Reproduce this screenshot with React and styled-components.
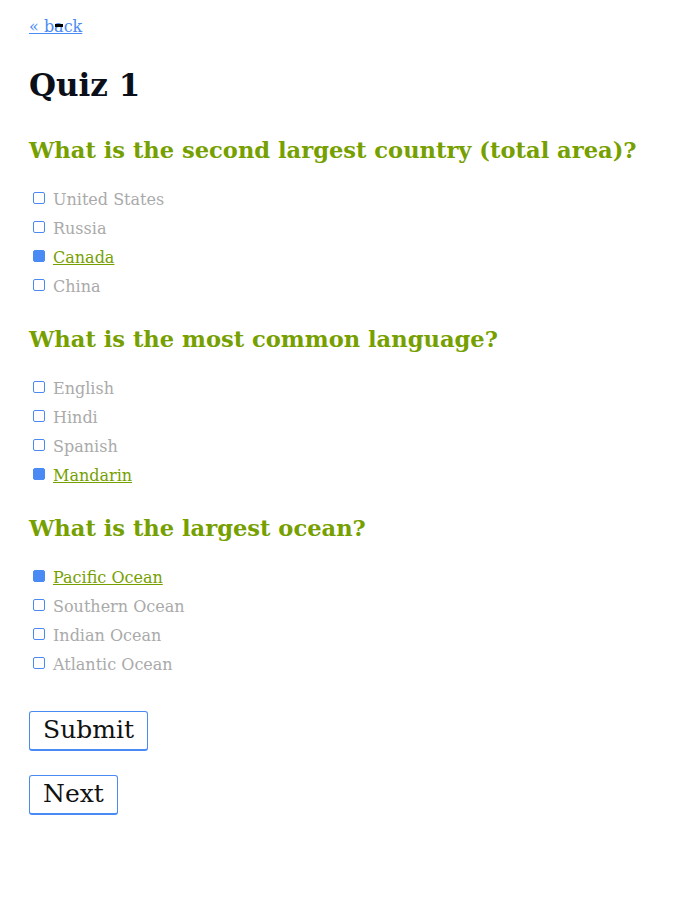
import React from 'react'
import styled, { createGlobalStyle } from 'styled-components'

const Global = createGlobalStyle`
  body {
    margin: 0;
    background: #fff;
    font-family: 'DejaVu Serif', 'Liberation Serif', serif;
  }
`

const Page = styled.main`
  padding: 16px 29px 40px;
`

const BackWrap = styled.div`
  position: relative;
  display: inline-block;
  line-height: 22px;
`

const Back = styled.a`
  color: #4a8af4;
  font-size: 16px;
  text-decoration: underline;
`

const Cursor = styled.span`
  position: absolute;
  left: 26px;
  top: 8px;
  width: 8px;
  height: 3px;
  background: #000;
`

const Title = styled.h1`
  margin: 27px 0 29px;
  font-size: 31px;
  line-height: 40px;
  font-weight: bold;
  color: #0b0f19;
`

const Question = styled.h2`
  margin: 22px 0 19px;
  font-size: 22.6px;
  line-height: 32px;
  font-weight: bold;
  color: #76a000;
`

const Options = styled.div`
  display: flex;
  flex-direction: column;
`

const Option = styled.label`
  display: flex;
  align-items: center;
  height: 29px;
  gap: 8px;
  padding-left: 4px;
  font-size: 16px;
  color: ${p => (p.$checked ? '#76a000' : '#aaaaaa')};
  text-decoration: ${p => (p.$checked ? 'underline' : 'none')};
`

const Box = styled.span`
  flex: none;
  width: 10px;
  height: 10px;
  border: 1px solid #4a8af4;
  border-radius: 2px;
  background: ${p => (p.$checked ? '#4a8af4' : '#fff')};
  margin-top: -3px;
`

const Button = styled.button`
  display: block;
  font-family: inherit;
  font-size: 25px;
  line-height: 34px;
  color: #111;
  background: #fff;
  border: 1px solid #4a8af4;
  border-bottom-width: 2px;
  border-radius: 3px;
  padding: 1px 13px 2px;
  margin-top: ${p => p.$mt}px;
`

const quiz = [
  {
    q: 'What is the second largest country (total area)?',
    options: ['United States', 'Russia', 'Canada', 'China'],
    answer: 2,
  },
  {
    q: 'What is the most common language?',
    options: ['English', 'Hindi', 'Spanish', 'Mandarin'],
    answer: 3,
  },
  {
    q: 'What is the largest ocean?',
    options: ['Pacific Ocean', 'Southern Ocean', 'Indian Ocean', 'Atlantic Ocean'],
    answer: 0,
  },
]

export default function App() {
  return (
    <>
      <Global />
      <Page>
        <BackWrap>
          <Back href="#">« back</Back>
          <Cursor />
        </BackWrap>
        <Title>Quiz 1</Title>
        {quiz.map(item => (
          <section key={item.q}>
            <Question>{item.q}</Question>
            <Options>
              {item.options.map((opt, i) => (
                <Option key={opt} $checked={i === item.answer}>
                  <Box $checked={i === item.answer} />
                  {opt}
                </Option>
              ))}
            </Options>
          </section>
        ))}
        <Button $mt={32}>Submit</Button>
        <Button $mt={24}>Next</Button>
      </Page>
    </>
  )
}
